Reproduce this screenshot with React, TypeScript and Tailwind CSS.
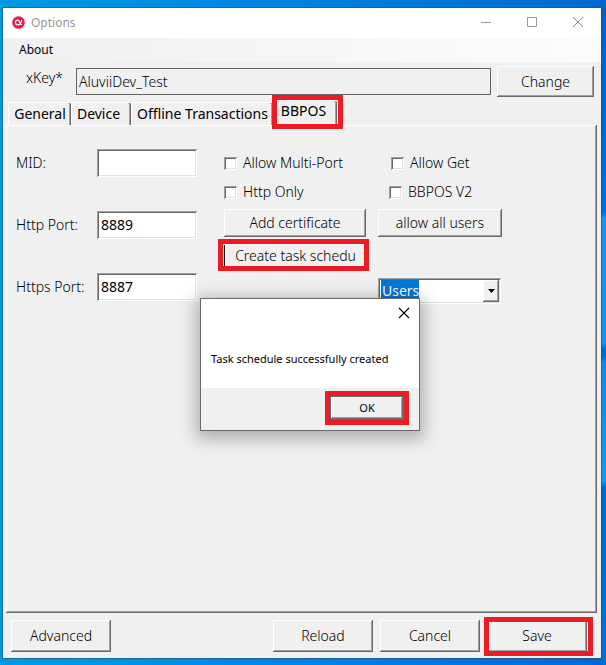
import React, { useState } from 'react';

const raised = "bg-[#f0f0f0] shadow-[inset_-1px_-1px_#696969,inset_1px_1px_#ffffff,inset_-2px_-2px_#a0a0a0]";
const sunken = "bg-white shadow-[inset_1px_1px_#a0a0a0,inset_-1px_-1px_#ffffff,inset_2px_2px_#696969,inset_-2px_-2px_#e3e3e3]";

// Red frame that marks a control
const Highlight: React.FC<{ className: string }> = ({ className }) => (
  <span className={`pointer-events-none absolute border-5 border-[#ed1c24] ${className}`} />
);

const Button: React.FC<{
  children: React.ReactNode;
  className?: string;
}> = ({ children, className = '' }) => (
  <button type="button" className={`relative text-sm font-light whitespace-nowrap ${raised} ${className}`}>
    {children}
  </button>
);

const Field: React.FC<{ id: string; label: string; value?: string }> = ({ id, label, value = '' }) => (
  <div className="flex h-7 items-center">
    <label htmlFor={id} className="w-[81px] shrink-0 text-sm font-light">{label}</label>
    <input id={id} defaultValue={value} className={`h-7 w-[100px] px-1 pb-0.5 text-sm outline-none ${sunken}`} />
  </div>
);

const Check: React.FC<{ label: string; className?: string }> = ({ label, className = '' }) => (
  <label className={`flex h-5 items-center gap-1.5 whitespace-nowrap text-sm font-light ${className}`}>
    <input type="checkbox" className={`size-[13px] appearance-none ${sunken}`} />
    {label}
  </label>
);

const Tab: React.FC<{ label: string; selected?: boolean; className: string }> = ({ label, selected, className }) => (
  <button
    type="button"
    role="tab"
    aria-selected={!!selected}
    className={`relative whitespace-nowrap rounded-t-xs border-t border-l border-white text-sm shadow-[inset_-1px_0_#696969,inset_-2px_0_#a0a0a0] ${className}`}
  >
    {label}
    {selected && <Highlight className="-top-1.5 -right-1.5 -bottom-1 -left-0.5" />}
  </button>
);

const MessageBox: React.FC<{ onClose: () => void }> = ({ onClose }) => (
  <div
    role="dialog"
    aria-label="Task schedule"
    className="absolute top-[290px] left-[197px] w-[220px] border border-[#696969] bg-white font-['Noto_Sans',sans-serif] shadow-[0_4px_16px_4px_rgba(0,0,0,0.28)]"
  >
    <div className="flex justify-end pt-2 pr-[9px]">
      <button type="button" aria-label="Close" onClick={onClose} className="size-3">
        <svg viewBox="0 0 12 12" className="size-3" stroke="#000" strokeWidth="1.1">
          <path d="M1 1 11 11M11 1 1 11" />
        </svg>
      </button>
    </div>
    <p className="pt-8 pb-[21px] pl-2.5 text-[11px] leading-4">Task schedule successfully created</p>
    <div className="flex justify-end bg-[#f0f0f0] pt-2 pr-[15px] pb-2.5">
      <button
        type="button"
        onClick={onClose}
        className="relative h-6 w-[74px] border border-[#696969] bg-[#f0f0f0] text-[11px] shadow-[inset_-1px_-1px_#696969,inset_1px_1px_#ffffff,inset_-2px_-2px_#a0a0a0]"
      >
        OK
        <Highlight className="-inset-1.5" />
      </button>
    </div>
  </div>
);

export default function App() {
  const [open, setOpen] = useState(true);

  return (
    <div className="flex min-h-screen bg-[linear-gradient(to_right,#009ae4,#0084e0_45%,#0068d0)] pt-2 pl-[3px] font-['Noto_Sans',sans-serif] text-black">
      <div className="flex min-w-0 flex-1 flex-col pb-[7px]">
        <div className="relative flex flex-1 flex-col bg-[#f0f0f0] shadow-[0_0_0_1px_rgba(40,80,110,0.6)]">
          <header className="flex h-[30px] items-center bg-white pl-[9px] text-[#999999]">
            <svg viewBox="0 0 13 13" className="mb-0.5 size-[13px]">
              <circle cx="6.5" cy="6.5" r="6.3" fill="#e31b54" />
              <path d="M9.8 4.2C8.8 7 7.6 8.9 5.8 8.9 4.4 8.9 3.4 8 3.4 6.5S4.4 4.1 5.8 4.1C7.7 4.1 8 8.7 9.9 8.7" fill="none" stroke="#fff" strokeWidth="1.2" />
            </svg>
            <h1 className="flex-1 pl-1.5 text-xs">Options</h1>
            <div className="flex gap-[34px] pr-[17px] pb-0.5">
              <button type="button" aria-label="Minimize">
                <svg viewBox="0 0 12 12" className="size-3" stroke="#999"><path d="M1 6.5H11" /></svg>
              </button>
              <button type="button" aria-label="Maximize">
                <svg viewBox="0 0 12 12" className="size-3" stroke="#999" fill="none"><path d="M1.5 1.5H10.5V10.5H1.5Z" /></svg>
              </button>
              <button type="button" aria-label="Close window">
                <svg viewBox="0 0 12 12" className="size-3" stroke="#888"><path d="M1 1 11 11M11 1 1 11" /></svg>
              </button>
            </div>
          </header>

          <nav className="flex h-6 items-center bg-linear-to-r from-[#f0f0f0] to-[#fcfcfc] pl-4 text-xs">
            <button type="button">About</button>
          </nav>

          <div className="flex items-start pt-1 pr-[7px]">
            <label htmlFor="xkey" className="w-[73px] shrink-0 pt-0.5 pl-[23px] text-sm font-light">xKey*</label>
            <input
              id="xkey"
              readOnly
              defaultValue="AluviiDev_Test"
              className="mt-0.5 h-[27px] min-w-0 flex-1 border border-[#646464] bg-[#f0f0f0] px-0.5 text-sm font-light outline-none"
            />
            <Button className="ml-1.5 h-[31px] w-[97px]">Change</Button>
          </div>

          <div role="tablist" className="relative z-10 mt-[5px] flex h-[23px] items-end pl-[5px]">
            <Tab label="General" className="h-[23px] w-[63px]" />
            <Tab label="Device" className="h-[23px] w-[60px] pr-1.5" />
            <Tab label="Offline Transactions" className="h-[23px] w-[142px]" />
            <Tab label="BBPOS" selected className="h-[25px] w-[64px] pr-1 pb-1" />
          </div>

          <main className={`mr-1 ml-[3px] flex flex-1 items-start pt-6 pl-2.5 ${raised}`}>
            <div className="flex w-[202px] shrink-0 flex-col gap-[34px]">
              <Field id="mid" label="MID:" />
              <Field id="http-port" label="Http Port:" value="8889" />
              <Field id="https-port" label="Https Port:" value="8887" />
            </div>
            <div className="flex w-[151px] shrink-0 flex-col items-start pt-1 pl-1.5">
              <Check label="Allow Multi-Port" />
              <Check label="Http Only" className="mt-[9px]" />
              <Button className="mt-[7px] h-7 w-[142px]">Add certificate</Button>
              <button
                type="button"
                className="relative mt-2 h-[22px] w-[142px] whitespace-nowrap border-l border-black text-sm font-light"
              >
                Create task schedu
                <Highlight className="-top-1.5 -right-[3px] -bottom-1 -left-[7px]" />
              </button>
            </div>
            <div className="ml-[9px] flex shrink-0 flex-col items-start pt-1">
              <Check label="Allow Get" className="pl-[13px]" />
              <Check label="BBPOS V2" className="mt-[9px] pl-[11px]" />
              <Button className="mt-[7px] h-7 w-[124px]">allow all users</Button>
              <div className="relative mt-[41px]">
                <select
                  aria-label="Account"
                  className="h-[26px] w-[123px] appearance-none bg-white bg-[linear-gradient(#0078d7,#0078d7)] bg-[length:38px_22px] bg-[position:3px_2px] bg-no-repeat px-1 text-sm text-white shadow-[inset_1px_1px_#a0a0a0,inset_-1px_-1px_#ffffff,inset_2px_2px_#696969,inset_-2px_-2px_#e3e3e3] outline-none"
                >
                  <option>Users</option>
                </select>
                <span className={`pointer-events-none absolute top-0.5 right-0.5 flex h-[22px] w-4 items-center justify-center ${raised}`}>
                  <svg viewBox="0 0 7 4" className="h-1 w-[7px]"><path d="M0 0H7L3.5 4Z" /></svg>
                </span>
              </div>
            </div>
          </main>

          <footer className="flex gap-[7px] pt-[7px] pr-[14px] pb-1.5 pl-2">
            <Button className="mr-auto h-8 w-[100px]">Advanced</Button>
            <Button className="h-8 w-[100px]">Reload</Button>
            <Button className="h-8 w-[100px]">Cancel</Button>
            <Button className="h-8 w-[100px]">
              Save
              <Highlight className="-top-[3px] -right-1.5 -bottom-1 -left-[3px]" />
            </Button>
          </footer>

          {open && <MessageBox onClose={() => setOpen(false)} />}
        </div>
      </div>
      <div className="w-[5px] shrink-0 bg-[linear-gradient(to_bottom,#0060c4,#006cd8_31%,#2490e4_32%,#1e8ee0_51%,#0068cc_52%,#0068cc_53%,#1888dc_54%,#189ae0_72%,#0068c4_73%,#0070d0)]" />
    </div>
  );
}
